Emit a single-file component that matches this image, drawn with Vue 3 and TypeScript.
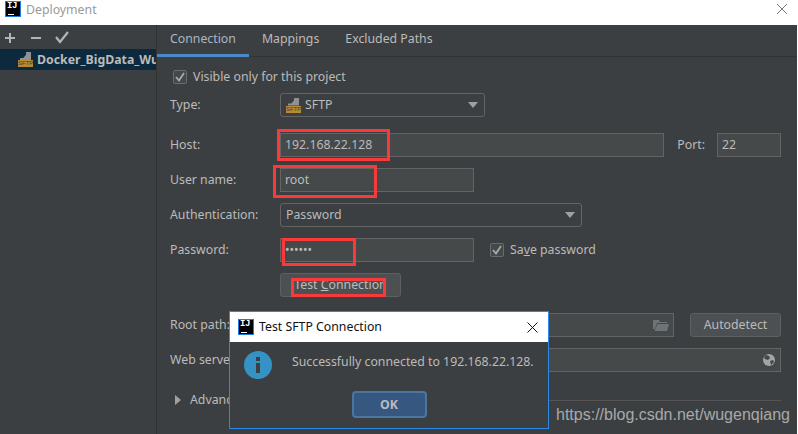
<script setup lang="ts">
const redBoxes = [
  { id: 'host', left: 277, top: 129, width: 113, height: 32 },
  { id: 'user', left: 273, top: 165, width: 104, height: 33 },
  { id: 'pass', left: 282, top: 238, width: 74, height: 28 },
  { id: 'test', left: 291, top: 278, width: 95, height: 19 },
]
function boxStyle(b: { left: number; top: number; width: number; height: number }) {
  return { left: b.left + 'px', top: b.top + 'px', width: b.width + 'px', height: b.height + 'px' }
}
</script>

<template>
  <div class="page">
    <header class="titlebar">
      <span class="ij"><b>IJ</b><i></i></span>
      <span class="title">Deployment</span>
      <svg class="close" width="12" height="12" viewBox="0 0 12 12"><path d="M1 1 11 11M11 1 1 11" stroke="#777" fill="none" /></svg>
    </header>
    <div class="main">
      <aside class="side">
        <div class="tools">
          <svg width="16" height="16" viewBox="0 0 16 16"><path d="M8 3v10M3 8h10" stroke="#b4b4b4" stroke-width="2" /></svg>
          <svg width="16" height="16" viewBox="0 0 16 16"><path d="M3 8h10" stroke="#b4b4b4" stroke-width="2" /></svg>
          <svg width="16" height="16" viewBox="0 0 16 16"><path d="M2 8l4 5 8-10" stroke="#b4b4b4" stroke-width="2.2" fill="none" /></svg>
        </div>
        <div class="server">
          <span class="sftp small"><i class="stack"></i><em>SFTP</em></span>
          <span class="server-name">Docker_BigData_Wu</span>
        </div>
      </aside>
      <section class="content">
        <nav class="tabs">
          <span class="tab active">Connection</span>
          <span class="tab">Mappings</span>
          <span class="tab">Excluded Paths</span>
        </nav>
        <div class="form">
          <label class="check-row"><span class="check"><svg width="10" height="10" viewBox="0 0 10 10"><path d="M1 5l3 3.5L9 1" stroke="#aaa" stroke-width="1.8" fill="none" /></svg></span>Visible only for this project</label>

          <div class="row type-row"><span class="lbl">Type:</span>
            <div class="select type-select"><span class="sftp"><i class="stack"></i><em>SFTP</em></span><span>SFTP</span><i class="arrow"></i></div>
          </div>
          <div class="row host-row"><span class="lbl">Host:</span>
            <div class="input grow">192.168.22.128</div>
            <span class="port-lbl">Port:</span>
            <div class="input port">22</div>
          </div>
          <div class="row"><span class="lbl">User name:</span><div class="input short">root</div></div>
          <div class="row"><span class="lbl">Authentication:</span>
            <div class="select auth-select"><span>Password</span><i class="arrow"></i></div>
          </div>
          <div class="row"><span class="lbl">Password:</span>
            <div class="input short dots">••••••</div>
            <span class="check save"><svg width="10" height="10" viewBox="0 0 10 10"><path d="M1 5l3 3.5L9 1" stroke="#aaa" stroke-width="1.8" fill="none" /></svg></span>
            <span>Sa<u>v</u>e password</span>
          </div>
          <div class="row"><span class="lbl"></span><button class="btn test">Test <u>C</u>onnection</button></div>
          <div class="row root-row"><span class="lbl">Root path:</span>
            <div class="input grow icon-input">
              <svg width="16" height="12" viewBox="0 0 16 12"><path d="M0 1h6l1 2h7v1H4L2 10H0zM4.500 5H16l-2 7H1.500z" fill="#6e7375" /></svg>
            </div>
            <button class="btn auto">Autodetect</button>
          </div>
          <div class="row"><span class="lbl">Web server URL:</span>
            <div class="input grow icon-input">
              <svg width="14" height="14" viewBox="0 0 14 14"><circle cx="7" cy="7" r="6" fill="#a2a4a6" /><path d="M4 2l3 1 1 2-2 2-3-1-1-2zM8 8l3-1 1 2-3 3z" fill="#45494a" /></svg>
            </div>
          </div>
          <div class="advanced">
            <i class="tri"></i><span>Advanced options</span><span class="rule"></span>
          </div>
        </div>
      </section>
    </div>

    <div
      v-for="b in redBoxes"
      :key="b.id"
      class="red"
      :style="boxStyle(b)"
    ></div>

    <div class="dialog">
      <div class="dlg-title">
        <span class="ij dlg-ij"><b>IJ</b><i></i></span>
        <span class="dlg-name">Test SFTP Connection</span>
        <svg class="dlg-close" width="11" height="11" viewBox="0 0 11 11"><path d="M.5.500l10 10M10.500.500l-10 10" stroke="#111" fill="none" /></svg>
      </div>
      <div class="dlg-body">
        <div class="dlg-msg">
          <svg width="28" height="28" viewBox="0 0 28 28"><circle cx="14" cy="14" r="14" fill="#3592c4" /><rect x="12" y="6" width="4" height="4" fill="#3c3f41" /><rect x="12" y="12" width="4" height="10" fill="#3c3f41" /></svg>
          <span class="dlg-text">Successfully connected to 192.168.22.128.</span>
        </div>
        <div class="dlg-actions"><button class="ok">OK</button></div>
      </div>
    </div>

    <div class="watermark">https://blog.csdn.net/wugenqiang</div>
  </div>
</template>

<style>
html, body { margin: 0; background: #fff; overflow: hidden; }
</style>

<style scoped>
.page {
  position: relative;
  width: 797px;
  height: 434px;
  overflow: hidden;
  background: #3c3f41;
  color: #bbb;
  font: 12.3px/18px "Noto Sans", "Open Sans", sans-serif;
}
.titlebar {
  display: flex;
  align-items: flex-start;
  height: 25px;
  background: #fff;
  padding: 1px 0 0 5px;
  box-sizing: border-box;
}
.ij {
  position: relative;
  display: block;
  flex: none;
  width: 16px;
  height: 16px;
  box-sizing: border-box;
  background: #000;
  outline: 1px solid #1f7ae0;
  outline-offset: -1px;
  color: #fff;
  margin-right: 5px;
}
.ij b {
  position: absolute;
  left: 2px;
  top: 1px;
  font: bold 9px/9px "Liberation Mono", monospace;
  letter-spacing: -0.5px;
}
.ij i {
  position: absolute;
  left: 3px;
  bottom: 2px;
  width: 6px;
  height: 1px;
  background: #fff;
}
.title {
  color: #9a9a9a;
  font-size: 12.3px;
  line-height: 16px;
  margin-top: 1px;
}
.close {
  margin-left: auto;
  margin-right: 9px;
  margin-top: 2px;
}
.main {
  display: flex;
  height: 409px;
}
.side {
  width: 156px;
  flex: none;
  border-right: 1px solid #323232;
}
.tools {
  display: flex;
  gap: 10px;
  align-items: center;
  height: 24px;
  padding: 0 0 0 2px;
  box-sizing: border-box;
}
.tools svg:nth-child(1) { margin-top: 2px; }
.tools svg:nth-child(2) { margin-top: 2px; }
.server {
  display: flex;
  align-items: center;
  height: 21px;
  background: #0d293e;
  padding-left: 18px;
  overflow: hidden;
  white-space: nowrap;
}
.server-name {
  font-weight: 700;
  color: #bbb;
  margin-left: 4px;
}
.sftp {
  position: relative;
  display: inline-block;
  flex: none;
  width: 15px;
  height: 15px;
}
.sftp .stack {
  position: absolute;
  left: 2px;
  top: 0;
  width: 11px;
  height: 8px;
  background: #8f9295;
  clip-path: polygon(55% 0, 100% 0, 100% 100%, 0 100%, 0 75%, 30% 75%, 55% 35%);
}
.sftp em {
  position: absolute;
  left: 0;
  bottom: 0;
  width: 15px;
  height: 7px;
  background: #b58a33;
  color: #3c3f41;
  font: normal 6px/7px "Liberation Sans", sans-serif;
  text-align: center;
}
.content {
  flex: 1;
  min-width: 0;
}
.tabs {
  display: flex;
  height: 32px;
  border-bottom: 1px solid #323232;
  box-sizing: border-box;
}
.tab {
  position: relative;
  padding: 5px 13px 0;
}
.tab.active {
  color: #a9b7c6;
}
.tab.active::after {
  content: "";
  position: absolute;
  left: 0;
  right: 0;
  bottom: -1px;
  height: 3px;
  background: #4a88c7;
}
.form {
  padding: 11px 16px 0 13px;
}
.check-row {
  display: flex;
  align-items: center;
  height: 18px;
  margin-bottom: 7px;
}
.check {
  display: flex;
  align-items: center;
  justify-content: center;
  flex: none;
  width: 14px;
  height: 14px;
  box-sizing: border-box;
  border: 1px solid #6b6b6b;
  border-radius: 2px;
  background: #43494a;
  margin-left: 3px;
  margin-right: 6px;
}
.row {
  display: flex;
  align-items: center;
  height: 24px;
  margin-bottom: 11px;
}
.type-row { margin-bottom: 16px; }
.lbl {
  flex: none;
  width: 110px;
}
.input, .select {
  display: flex;
  align-items: center;
  box-sizing: border-box;
  height: 24px;
  border: 1px solid #646464;
  padding: 0 4px;
}
.input {
  background: #45494a;
}
.select {
  border-radius: 3px;
  padding: 0 5px;
}
.grow { flex: 1; min-width: 0; }
.short { width: 194px; }
.port { width: 64px; }
.port-lbl { margin: 0 12px 0 13px; }
.type-select { width: 205px; gap: 4px; }
.auth-select { width: 302px; }
.arrow {
  margin-left: auto;
  margin-right: 1px;
  width: 0;
  height: 0;
  border-left: 5px solid transparent;
  border-right: 5px solid transparent;
  border-top: 6px solid #a0a0a0;
}
.dots {
  font-size: 12px;
}
.save { margin-left: 16px; }
.btn {
  box-sizing: border-box;
  height: 24px;
  border: 1px solid #5e6060;
  border-radius: 3px;
  background: #4c5052;
  color: #bbb;
  font: inherit;
  padding: 0;
}
.test { width: 121px; }
.auto { width: 91px; margin-left: 16px; flex: none; }
.root-row { margin-top: 16px; }
.icon-input { justify-content: flex-end; }
.advanced {
  display: flex;
  align-items: center;
  margin-top: 18px;
  height: 20px;
  padding-left: 5px;
}
.tri {
  width: 0;
  height: 0;
  border-top: 5px solid transparent;
  border-bottom: 5px solid transparent;
  border-left: 6px solid #a0a0a0;
  margin-right: 9px;
}
.rule {
  flex: 1;
  height: 1px;
  background: #555;
  margin-left: 10px;
}
.red {
  position: absolute;
  box-sizing: border-box;
  border: 3px solid #f93a3a;
}
.dialog {
  position: absolute;
  left: 229px;
  top: 311px;
  width: 320px;
  height: 118px;
  box-sizing: border-box;
  border: 1px solid #2b8ae8;
  background: #3c3f41;
}
.dlg-title {
  display: flex;
  align-items: center;
  height: 30px;
  background: #fff;
  padding-left: 8px;
  color: #111;
  box-sizing: border-box;
}
.dlg-ij { margin-right: 5px; }
.dlg-name { color: #111; }
.dlg-close { margin-left: auto; margin-right: 10px; }
.dlg-body {
  padding: 9px 0 0 14px;
}
.dlg-msg {
  display: flex;
  align-items: center;
  gap: 20px;
  height: 28px;
}
.dlg-text { margin-top: -7px; }
.dlg-actions {
  display: flex;
  justify-content: center;
  padding-top: 12px;
  padding-right: 14px;
}
.ok {
  width: 75px;
  height: 27px;
  box-sizing: border-box;
  border: 2px solid #4a76a4;
  border-radius: 4px;
  background: #365880;
  color: #bbb;
  font: bold 12.3px "Noto Sans", sans-serif;
  padding: 0;
}
.watermark {
  position: absolute;
  left: 556px;
  top: 405px;
  color: #a9a9a9;
  font: 16px/20px "Liberation Sans", sans-serif;
  white-space: nowrap;
}
</style>
